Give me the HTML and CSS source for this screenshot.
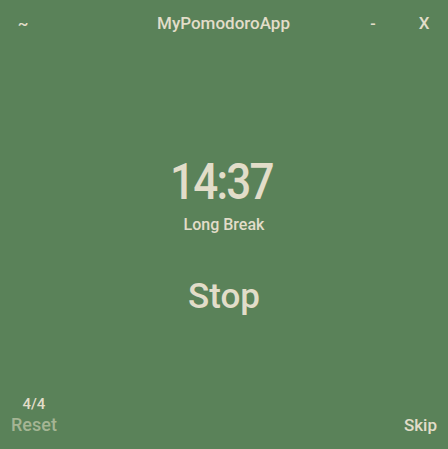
FILE: index.html
```html
<!DOCTYPE html>
<html>
<head>
<meta charset="utf-8">
<link rel="stylesheet" href="styles.css">
</head>
<body>
<div class="app">
  <header class="titlebar">
    <span class="tb-btn tb-left">~</span>
    <span class="tb-title">MyPomodoroApp</span>
    <span class="tb-btn tb-min">-</span>
    <span class="tb-btn tb-close">X</span>
  </header>
  <main class="center">
    <div class="time">14:37</div>
    <div class="mode">Long Break</div>
    <div class="action">Stop</div>
  </main>
  <footer class="footer">
    <div class="footer-left">
      <div class="count">4/4</div>
      <div class="reset">Reset</div>
    </div>
    <div class="skip">Skip</div>
  </footer>
</div>
</body>
</html>
```
FILE: styles.css
```css
html, body {
  margin: 0;
  padding: 0;
  width: 448px;
  height: 449px;
  overflow: hidden;
}
body {
  background: #5a8259;
  font-family: Roboto, "Liberation Sans", sans-serif;
  color: #e2ddc9;
}
.app {
  display: flex;
  flex-direction: column;
  height: 449px;
}
.titlebar {
  display: flex;
  align-items: center;
  height: 46px;
  font-weight: 500;
  font-size: 17px;
}
.tb-left { width: 46px; text-align: center; font-size: 16px; }
.tb-title { flex: 1; text-align: center; padding-left: 48px; }
.tb-min { width: 40px; text-align: center; font-size: 16px; margin-right: 7px; }
.tb-close { width: 48px; text-align: center; font-size: 17px; }
.center {
  flex: 1;
  display: flex;
  flex-direction: column;
  align-items: center;
  padding-top: 106px;
}
.time {
  font-size: 50px;
  font-weight: 500;
  line-height: 60px;
  letter-spacing: -2px;
  transform: scaleX(0.88);
  margin-right: 5px;
}
.mode {
  font-size: 16px;
  font-weight: 500;
  margin-top: 3px;
}
.action {
  font-size: 35px;
  font-weight: 500;
  margin-top: 42px;
}
.footer {
  display: flex;
  justify-content: space-between;
  align-items: flex-end;
  padding: 0 11px 14px 11px;
}
.footer-left {
  display: flex;
  flex-direction: column;
  align-items: center;
}
.count { font-size: 15px; font-weight: 500; margin-bottom: 1px; }
.reset { font-size: 18px; font-weight: 500; color: #a5b594; }
.skip { font-size: 17px; font-weight: 500; }
```
